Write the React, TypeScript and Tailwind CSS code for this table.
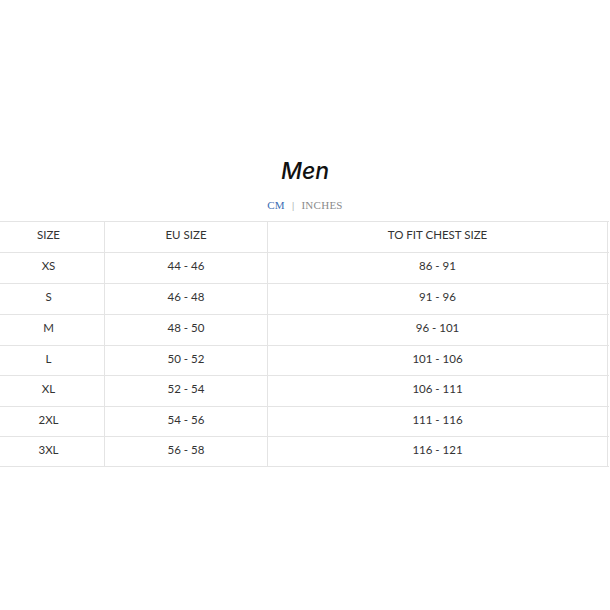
import React from 'react';

type Row = { size: string; eu: string; chest: string; h: string };

const rows: Row[] = [
    { size: 'XS', eu: '44 - 46', chest: '86 - 91', h: 'h-[31px]' },
    { size: 'S', eu: '46 - 48', chest: '91 - 96', h: 'h-[31px]' },
    { size: 'M', eu: '48 - 50', chest: '96 - 101', h: 'h-[31px]' },
    { size: 'L', eu: '50 - 52', chest: '101 - 106', h: 'h-[30px]' },
    { size: 'XL', eu: '52 - 54', chest: '106 - 111', h: 'h-[31px]' },
    { size: '2XL', eu: '54 - 56', chest: '111 - 116', h: 'h-[30px]' },
    { size: '3XL', eu: '56 - 58', chest: '116 - 121', h: 'h-[30px]' },
];

const cell = 'flex items-center justify-center border-r border-[#e4e4e4] pb-[4px]';

const App: React.FC = () => {
    return (
        <div className="min-h-screen w-full overflow-hidden bg-white pt-[156px] font-['Lato',sans-serif] text-[11.5px] text-[#333]">
            <h2 className="text-center font-['Inter',sans-serif] text-[23px] font-medium italic leading-[30px] text-[#111]">
                Men
            </h2>
            <div className="mt-[12px] flex items-center justify-center gap-[7px] font-['Liberation_Serif',serif] text-[11px] leading-[14px] tracking-wide">
                <span className="text-[#3b6db3]">CM</span>
                <span className="text-[#999]">|</span>
                <span className="text-[#8a8a8a]">INCHES</span>
            </div>

            {/* table bleeds off the left edge like the original page */}
            <div className="ml-[-7px] mt-[9px] w-[616px] border-t border-[#e4e4e4]">
                <div className="grid h-[31px] grid-cols-[112px_163px_340px] border-b border-[#e4e4e4]">
                    <div className={cell}>SIZE</div>
                    <div className={cell}>EU SIZE</div>
                    <div className={cell}>TO FIT CHEST SIZE</div>
                </div>
                {rows.map((r) => (
                    <div key={r.size} className={`grid grid-cols-[112px_163px_340px] border-b border-[#e4e4e4] ${r.h}`}>
                        <div className={cell}>{r.size}</div>
                        <div className={cell}>{r.eu}</div>
                        <div className={cell}>{r.chest}</div>
                    </div>
                ))}
            </div>
        </div>
    );
};

export default App;
